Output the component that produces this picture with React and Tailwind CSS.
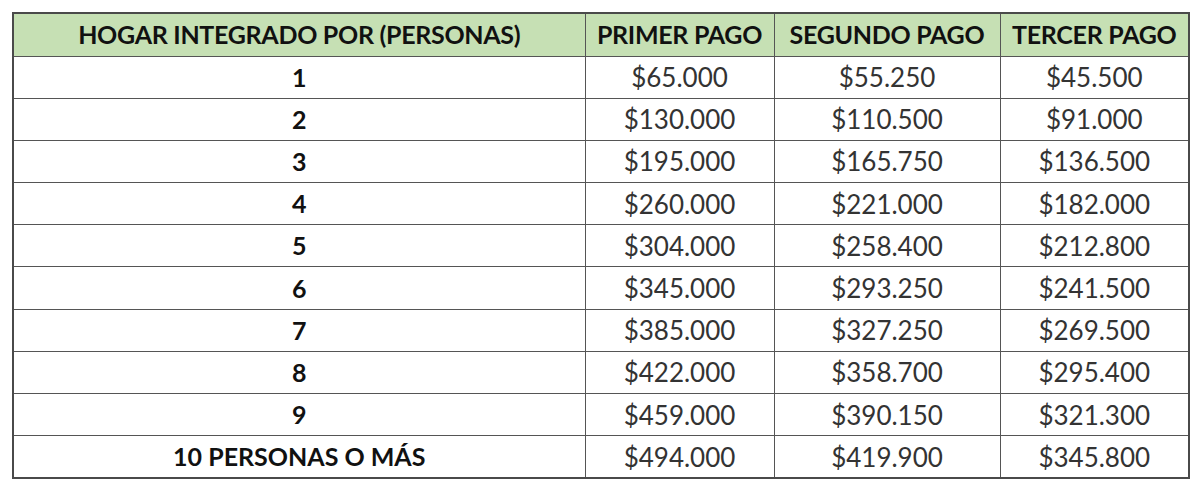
const ROWS = [
  ["1", "$65.000", "$55.250", "$45.500"],
  ["2", "$130.000", "$110.500", "$91.000"],
  ["3", "$195.000", "$165.750", "$136.500"],
  ["4", "$260.000", "$221.000", "$182.000"],
  ["5", "$304.000", "$258.400", "$212.800"],
  ["6", "$345.000", "$293.250", "$241.500"],
  ["7", "$385.000", "$327.250", "$269.500"],
  ["8", "$422.000", "$358.700", "$295.400"],
  ["9", "$459.000", "$390.150", "$321.300"],
  ["10 PERSONAS O MÁS", "$494.000", "$419.900", "$345.800"],
];

const HEAD = ["HOGAR INTEGRADO POR (PERSONAS)", "PRIMER PAGO", "SEGUNDO PAGO", "TERCER PAGO"];

export default function App() {
  return (
    <div className="w-[1200px] h-[500px] bg-white pt-[12px] pl-[12px] font-['Lato','Liberation_Sans',sans-serif]">
      <table className="border-collapse border-2 border-[#4a4a4a] table-fixed w-[1176px]">
        <colgroup>
          <col className="w-[572px]" />
          <col className="w-[189px]" />
          <col className="w-[226px]" />
          <col className="w-[189px]" />
        </colgroup>
        <thead>
          <tr className="bg-[#c6e0b4] h-[43px]">
            {HEAD.map((h) => (
              <th
                key={h}
                className="border border-[#555] text-[25px] leading-none font-bold text-[#111] text-center p-0 tracking-[-0.3px] whitespace-nowrap"
              >
                {h}
              </th>
            ))}
          </tr>
        </thead>
        <tbody>
          {ROWS.map((r) => (
            <tr key={r[0]} className="h-[42.2px]">
              {r.map((c, i) => (
                <td
                  key={i}
                  className={`border border-[#555] text-center p-0 leading-none ${
                    i === 0 ? "text-[25px] font-bold text-[#111]" : "text-[26px] text-[#333]"
                  }`}
                >
                  {c}
                </td>
              ))}
            </tr>
          ))}
        </tbody>
      </table>
    </div>
  );
}
